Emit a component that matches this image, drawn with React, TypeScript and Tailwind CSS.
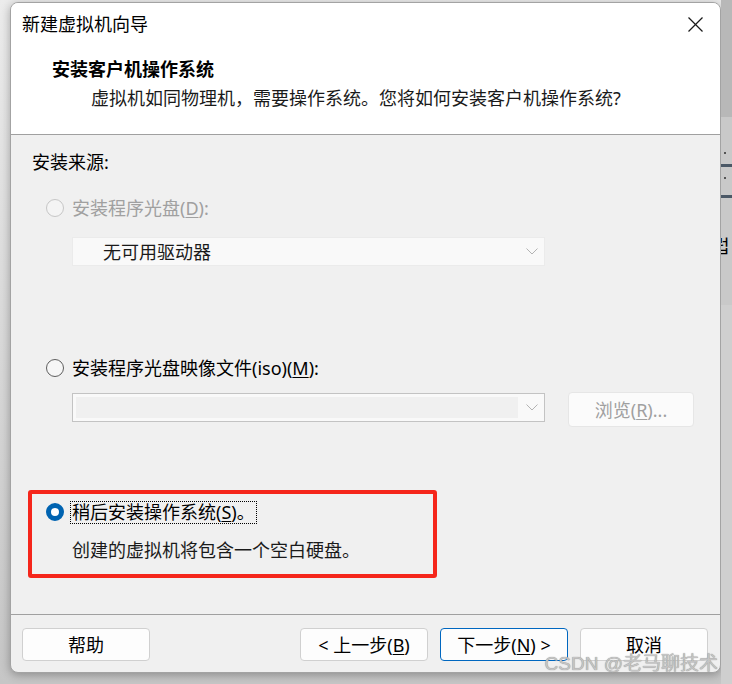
import React from "react";

const FONT = { fontFamily: '"Noto Sans", "Noto Sans CJK SC", sans-serif' };

function Radio({ state }: { state: "off" | "disabled" | "on" }) {
  if (state === "on") {
    return <span className="block h-[18px] w-[18px] shrink-0 rounded-full border-[5px] border-[#0063b1] bg-white" />;
  }
  if (state === "disabled") {
    return <span className="block h-[18px] w-[18px] shrink-0 rounded-full border border-[#c6c6c6] bg-[#f4f4f4]" />;
  }
  return <span className="block h-[18px] w-[18px] shrink-0 rounded-full border border-[#5e5e5e] bg-[#f6f6f6]" />;
}

function Chevron() {
  return (
    <svg width="12" height="7" viewBox="0 0 12 7" className="shrink-0">
      <polyline points="0.5,0.5 6,6 11.5,0.5" fill="none" stroke="#b3b3b3" strokeWidth="1" />
    </svg>
  );
}

function Button({ children, primary }: { children: React.ReactNode; primary?: boolean }) {
  return (
    <div
      className={
        "flex h-[33px] w-[128px] items-center justify-center rounded-[4px] bg-[#fdfdfd] text-[18px] leading-6 text-black " +
        (primary ? "border border-[#0067c0]" : "border border-[#d0d0d0]")
      }
    >
      {children}
    </div>
  );
}

function RightStrip() {
  return (
    <div className="flex w-[11px] shrink-0 flex-col overflow-hidden bg-[#c9c9c9]">
      <div className="h-[117px] shrink-0 bg-[#b8b8b8]" />
      <div className="mt-[35px] ml-[3px] h-[2px] w-[2px] shrink-0 bg-[#555]" />
      <div className="mt-[10px] h-[3px] shrink-0 bg-[#4b5866]" />
      <div className="mt-[10px] ml-[3px] h-[2px] w-[2px] shrink-0 bg-[#555]" />
      <div className="mt-[16px] h-[3px] shrink-0 bg-[#4b5866]" />
      <div
        className="mt-[35px] -ml-[8px] shrink-0 text-[18px] leading-6 text-black"
        style={{ fontFamily: '"Noto Sans CJK KR", sans-serif' }}
      >
        럽
      </div>
      <div className="mt-[48px] flex-1 bg-[#cfcfcf]" />
    </div>
  );
}

export default function App() {
  return (
    <div
      className="relative flex h-[684px] w-[732px] overflow-hidden bg-linear-to-b from-[#ececec] to-[#c6c6c6] pl-[10px]"
      style={FONT}
    >
      {/* dialog */}
      <div className="mt-[2px] flex h-[671px] w-[711px] shrink-0 flex-col overflow-hidden rounded-lg border border-[#a3a3a3] bg-[#f0f0f0] shadow-[0_2px_10px_rgba(0,0,0,0.3)]">
        {/* header */}
        <div className="flex h-[132px] shrink-0 flex-col border-b border-[#a0a0a0] bg-white">
          <div className="flex h-[42px] items-center justify-between pl-[11px] pr-[17px]">
            <span className="text-[18px] leading-6 text-black">新建虚拟机向导</span>
            <svg width="15" height="15" viewBox="0 0 15 15">
              <line x1="0.5" y1="0.5" x2="14.5" y2="14.5" stroke="#1a1a1a" strokeWidth="1.3" />
              <line x1="14.5" y1="0.5" x2="0.5" y2="14.5" stroke="#1a1a1a" strokeWidth="1.3" />
            </svg>
          </div>
          <div className="mt-[12px] pl-[41px] text-[18px] font-bold leading-6 text-black">安装客户机操作系统</div>
          <div className="mt-[5px] pl-[80px] text-[18px] leading-6 text-[#1a1a1a]">
            虚拟机如同物理机，需要操作系统。您将如何安装客户机操作系统?
          </div>
        </div>

        {/* body */}
        <div className="flex h-[479px] shrink-0 flex-col pt-[15px] text-[18px] leading-6">
          <div className="ml-[21px] h-6 text-black">安装来源:</div>

          <div className="mt-[22px] ml-[35px] flex h-6 items-center gap-2">
            <Radio state="disabled" />
            <span className="text-[#a0a0a0]">
              安装程序光盘(<span className="underline underline-offset-2">D</span>):
            </span>
          </div>

          <div className="mt-[17px] ml-[61px] flex h-[29px] w-[473px] items-center justify-between border border-[#ebebeb] bg-[#f9f9f9] pl-[30px] pr-[6px]">
            <span className="text-[#1a1a1a]">无可用驱动器</span>
            <Chevron />
          </div>

          <div className="mt-[90px] ml-[35px] flex h-6 items-center gap-2">
            <Radio state="off" />
            <span className="text-black">
              安装程序光盘映像文件(iso)(<span className="underline underline-offset-2">M</span>):
            </span>
          </div>

          <div className="mt-[12px] ml-[61px] flex items-start gap-[23px]">
            <div className="mt-[1px] flex h-[29px] w-[473px] items-center border border-[#c3c3c3] bg-[#f9f9f9] p-[3px] pr-[6px]">
              <div className="h-full w-[442px] bg-[#f0f0f0]" />
              <div className="flex flex-1 justify-end">
                <Chevron />
              </div>
            </div>
            <div className="flex h-[35px] w-[126px] items-center justify-center rounded-[4px] border border-[#e6e6e6] bg-[#fbfbfb] text-[#a0a0a0]">
              浏览(<span className="underline underline-offset-2">R</span>)...
            </div>
          </div>

          {/* highlighted option */}
          <div className="mt-[63px] ml-[17px] flex h-[88px] w-[409px] flex-col rounded-[3px] border-4 border-[#f5261b] pt-[6px] pl-[14px]">
            <div className="flex h-6 items-center gap-[6px]">
              <Radio state="on" />
              <span className="border border-dotted border-black px-[1px] leading-[21px] text-black">
                稍后安装操作系统(<span className="underline underline-offset-2">S</span>)。
              </span>
            </div>
            <div className="mt-[14px] pl-[26px] text-[#1a1a1a]">创建的虚拟机将包含一个空白硬盘。</div>
          </div>
        </div>

        {/* footer */}
        <div className="flex flex-1 items-start border-t border-[#a0a0a0] pt-[13px] pl-[11px] pr-[12px]">
          <Button>帮助</Button>
          <div className="flex-1" />
          <div className="flex gap-[12px]">
            <Button>
              &lt; 上一步(<span className="underline underline-offset-2">B</span>)
            </Button>
            <Button primary>
              下一步(<span className="underline underline-offset-2">N</span>) &gt;
            </Button>
            <Button>取消</Button>
          </div>
        </div>
      </div>

      <RightStrip />

      {/* watermark */}
      <div
        className="absolute right-[14px] bottom-[8px] text-[19px] leading-6 text-[#c4c4c4] [text-shadow:0_0_1px_#7a7a7a]"
        style={{ fontFamily: '"Liberation Sans", "Noto Sans CJK SC", sans-serif' }}
      >
        CSDN @老马聊技术
      </div>
    </div>
  );
}
